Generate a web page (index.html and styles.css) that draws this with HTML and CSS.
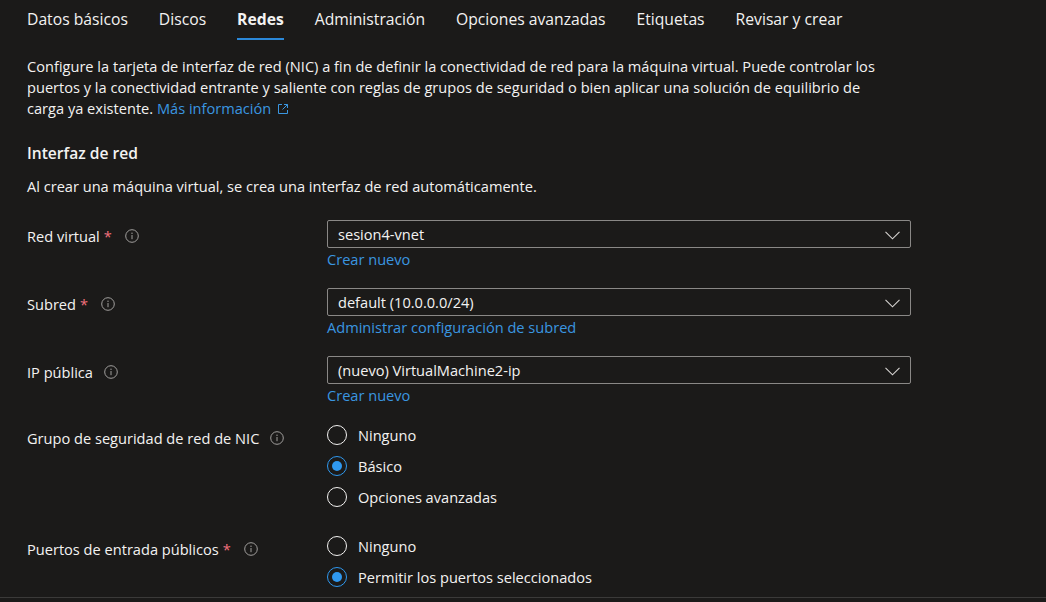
FILE: index.html
```html
<!DOCTYPE html>
<html lang="es">
<head>
<meta charset="utf-8">
<link rel="stylesheet" href="styles.css">
</head>
<body>
<div class="page">
  <nav class="tabs">
    <span class="tab">Datos básicos</span>
    <span class="tab">Discos</span>
    <span class="tab active">Redes</span>
    <span class="tab">Administración</span>
    <span class="tab">Opciones avanzadas</span>
    <span class="tab">Etiquetas</span>
    <span class="tab">Revisar y crear</span>
  </nav>

  <main class="content">
    <p class="intro">Configure la tarjeta de interfaz de red (NIC) a fin de definir la conectividad de red para la máquina virtual. Puede controlar los puertos y la conectividad entrante y saliente con reglas de grupos de seguridad o bien aplicar una solución de equilibrio de carga ya existente. <a class="link">Más información <svg class="ext" width="12" height="12" viewBox="0 0 12 12"><path d="M5 1.5H1.5v9h9V7" fill="none" stroke="currentColor" stroke-width="1"/><path d="M7 1.5h3.5V5M10.5 1.5L5.5 6.5" fill="none" stroke="currentColor" stroke-width="1"/></svg></a></p>

    <h2 class="section-title">Interfaz de red</h2>
    <p class="section-sub">Al crear una máquina virtual, se crea una interfaz de red automáticamente.</p>

    <div class="form">
      <div class="row">
        <div class="label"><span>Red virtual</span><span class="req">*</span><svg class="info" width="14" height="14" viewBox="0 0 14 14"><circle cx="7" cy="7" r="6.3" fill="none" stroke="#a19f9d" stroke-width="1"/><path d="M7 6v4.2" stroke="#a19f9d" stroke-width="1"/><circle cx="7" cy="4.2" r="0.7" fill="#a19f9d"/></svg></div>
        <div class="control">
          <div class="select"><span>sesion4-vnet</span><svg class="chev" width="15" height="9" viewBox="0 0 15 9"><path d="M0.5 0.8L7.5 7.8L14.5 0.8" fill="none" stroke="#d6d4d2" stroke-width="1.1"/></svg></div>
          <a class="link sub">Crear nuevo</a>
        </div>
      </div>

      <div class="row">
        <div class="label"><span>Subred</span><span class="req">*</span><svg class="info" width="14" height="14" viewBox="0 0 14 14"><circle cx="7" cy="7" r="6.3" fill="none" stroke="#a19f9d" stroke-width="1"/><path d="M7 6v4.2" stroke="#a19f9d" stroke-width="1"/><circle cx="7" cy="4.2" r="0.7" fill="#a19f9d"/></svg></div>
        <div class="control">
          <div class="select"><span>default (10.0.0.0/24)</span><svg class="chev" width="15" height="9" viewBox="0 0 15 9"><path d="M0.5 0.8L7.5 7.8L14.5 0.8" fill="none" stroke="#d6d4d2" stroke-width="1.1"/></svg></div>
          <a class="link sub">Administrar configuración de subred</a>
        </div>
      </div>

      <div class="row">
        <div class="label"><span>IP pública</span><svg class="info noreq" width="14" height="14" viewBox="0 0 14 14"><circle cx="7" cy="7" r="6.3" fill="none" stroke="#a19f9d" stroke-width="1"/><path d="M7 6v4.2" stroke="#a19f9d" stroke-width="1"/><circle cx="7" cy="4.2" r="0.7" fill="#a19f9d"/></svg></div>
        <div class="control">
          <div class="select"><span>(nuevo) VirtualMachine2-ip</span><svg class="chev" width="15" height="9" viewBox="0 0 15 9"><path d="M0.5 0.8L7.5 7.8L14.5 0.8" fill="none" stroke="#d6d4d2" stroke-width="1.1"/></svg></div>
          <a class="link sub">Crear nuevo</a>
        </div>
      </div>

      <div class="row radio-row">
        <div class="label"><span>Grupo de seguridad de red de NIC</span><svg class="info noreq" width="14" height="14" viewBox="0 0 14 14"><circle cx="7" cy="7" r="6.3" fill="none" stroke="#a19f9d" stroke-width="1"/><path d="M7 6v4.2" stroke="#a19f9d" stroke-width="1"/><circle cx="7" cy="4.2" r="0.7" fill="#a19f9d"/></svg></div>
        <div class="control radios">
          <div class="radio"><span class="circle"></span>Ninguno</div>
          <div class="radio"><span class="circle checked"></span>Básico</div>
          <div class="radio"><span class="circle"></span>Opciones avanzadas</div>
        </div>
      </div>

      <div class="row radio-row">
        <div class="label"><span>Puertos de entrada públicos</span><span class="req">*</span><svg class="info" width="14" height="14" viewBox="0 0 14 14"><circle cx="7" cy="7" r="6.3" fill="none" stroke="#a19f9d" stroke-width="1"/><path d="M7 6v4.2" stroke="#a19f9d" stroke-width="1"/><circle cx="7" cy="4.2" r="0.7" fill="#a19f9d"/></svg></div>
        <div class="control radios">
          <div class="radio"><span class="circle"></span>Ninguno</div>
          <div class="radio"><span class="circle checked"></span>Permitir los puertos seleccionados</div>
        </div>
      </div>
    </div>
  </main>
  <div class="footer-line"></div>
</div>
</body>
</html>
```

FILE: styles.css
```css
* { box-sizing: border-box; }
html, body {
  margin: 0;
  padding: 0;
  background: #1b1a19;
}
body {
  font-family: "Open Sans", "Noto Sans", sans-serif;
  color: #f3f2f1;
  font-size: 14.6px;
  width: 1046px;
  height: 602px;
  overflow: hidden;
}
.page {
  height: 602px;
  display: flex;
  flex-direction: column;
}
.tabs {
  display: flex;
  gap: 31px;
  padding: 0 0 0 27px;
  height: 40px;
  align-items: stretch;
}
.tab {
  font-size: 15.7px;
  display: flex;
  align-items: center;
  padding-bottom: 1px;
  color: #f3f2f1;
  border-bottom: 2px solid transparent;
}
.tab.active {
  font-weight: 700;
  border-bottom-color: #2b88d8;
}
.content {
  flex: 1;
  padding: 0 0 0 27px;
}
.intro {
  margin: 16px 0 0;
  width: 870px;
  line-height: 21px;
}
.link {
  color: #3a96e0;
  text-decoration: none;
}
.ext { vertical-align: -1px; margin-left: 2px; }
.section-title {
  margin: 24px 0 0;
  font-size: 15.6px;
  font-weight: 600;
  line-height: 20px;
}
.section-sub {
  margin: 13px 0 0;
  line-height: 20px;
}
.form {
  margin-top: 24px;
  display: flex;
  flex-direction: column;
  gap: 17px;
}
.row {
  display: grid;
  grid-template-columns: 300px 584px;
}
.label {
  display: flex;
  align-items: center;
  height: 32px;
}
.req {
  color: #f1707b;
  margin-left: 4px;
}
.info {
  margin-left: 13px;
  flex: none;
}
.info.noreq { margin-left: 11px; }
.select {
  height: 28px;
  border: 1px solid #8a8886;
  border-radius: 2px;
  display: flex;
  align-items: center;
  justify-content: space-between;
  padding: 0 10px 0 10px;
}
.chev { margin-top: 2px; }
.sub {
  display: block;
  line-height: 23px;
}
.radio-row .label {
  height: 28px;
}
.radios {
  display: flex;
  flex-direction: column;
  margin-top: -5px;
}
.radio-row + .radio-row {
  margin-top: 6px;
}
.radio {
  display: flex;
  align-items: center;
  height: 31px;
}
.circle {
  width: 20px;
  height: 20px;
  border: 1px solid #f3f2f1;
  border-radius: 50%;
  margin-right: 11px;
  position: relative;
  flex: none;
}
.circle.checked {
  border-color: #2f98ef;
}
.circle.checked::after {
  content: "";
  position: absolute;
  left: 4px;
  top: 4px;
  width: 10px;
  height: 10px;
  border-radius: 50%;
  background: #2f98ef;
}
.footer-line {
  height: 5px;
  border-top: 1px solid #3b3a39;
}
```
